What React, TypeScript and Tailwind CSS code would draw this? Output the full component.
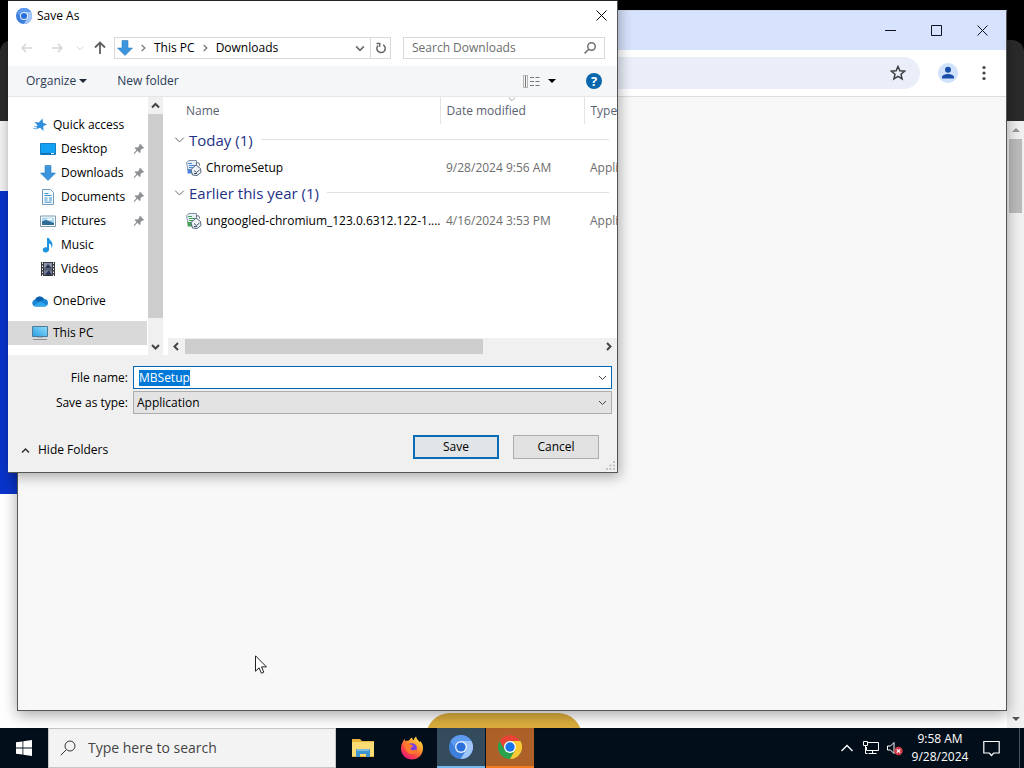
import { useEffect, useRef, type ReactNode } from 'react'

const segoe = "font-['Open_Sans','Noto_Sans',sans-serif]"

function Chevron({ dir, className }: { dir: 'up' | 'down' | 'left' | 'right'; className?: string }) {
  const paths = {
    up: 'M1 6.5 4.5 3 8 6.5',
    down: 'M1 3 4.5 6.5 8 3',
    left: 'M6 1 2.5 4.5 6 8',
    right: 'M3 1 6.5 4.5 3 8',
  }
  return (
    <svg viewBox="0 0 9 9" fill="none" stroke="currentColor" className={className} aria-hidden>
      <path d={paths[dir]} />
    </svg>
  )
}

function Caret({ className }: { className?: string }) {
  return (
    <svg viewBox="0 0 8 4" fill="currentColor" className={className} aria-hidden>
      <path d="M0 0h8L4 4z" />
    </svg>
  )
}

function ChromiumIcon({ className }: { className?: string }) {
  return (
    <svg viewBox="0 0 24 24" className={className} aria-hidden>
      <circle cx="12" cy="12" r="12" fill="#3f7fdc" />
      <path d="M12 6h10.4A12 12 0 0 1 11.6 24l5.6-9z" fill="#9fc5fb" />
      <path d="M1.6 6A12 12 0 0 1 22.4 6H12a6 6 0 0 0-5.4 3.4L5 11.5z" fill="#5e9bf0" />
      <circle cx="12" cy="12" r="6" fill="#e8f1fe" />
      <circle cx="12" cy="12" r="4.6" fill="#2a6fdb" />
    </svg>
  )
}

function ChromeIcon({ className }: { className?: string }) {
  return (
    <svg viewBox="0 0 24 24" className={className} aria-hidden>
      <circle cx="12" cy="12" r="12" fill="#2ba24c" />
      <path d="M12 6h10.4A12 12 0 0 1 12 24l5.2-9z" fill="#fcc934" />
      <path d="M1.6 6A12 12 0 0 1 22.4 6H12a6 6 0 0 0-5.2 9z" fill="#ea4335" />
      <circle cx="12" cy="12" r="6" fill="#fff" />
      <circle cx="12" cy="12" r="4.7" fill="#1a73e8" />
    </svg>
  )
}

function FirefoxIcon() {
  return (
    <svg viewBox="0 0 24 24" className="size-6" aria-hidden>
      <defs>
        <linearGradient id="fox" x1="0.9" y1="0" x2="0.2" y2="1">
          <stop offset="0" stopColor="#fff04a" />
          <stop offset="0.4" stopColor="#ff9a2b" />
          <stop offset="0.75" stopColor="#fb3b4b" />
          <stop offset="1" stopColor="#e31587" />
        </linearGradient>
      </defs>
      <path
        d="M3.2 5.2c.4-1 1-1.700 1.500-2.100 0 .9.300 1.600.900 2.200 1-.5 2.200-.8 3.400-.7C9.800 3 11 2 12.300 1.600c-.2 1.200.3 2 1.300 2.700.4-1.600 1.300-3 2.500-3.800.3 2.700 2.500 3.900 3.900 5.700.2-.4.100-1-.1-1.400 2.300 2 3.400 5 3.100 8.200C22.500 19 18 23.500 12 23.500S1 19 1 12.800c0-3 .8-5.800 2.200-7.600z"
        fill="url(#fox)"
      />
      <circle cx="12" cy="12.300" r="5" fill="#7a3fe0" />
      <path d="M4.500 8.500c2-1.500 4.500-1 6 .3 1.300 0 2.300.4 2.600 1.100-.5 1-2.200 1.200-2.900 2.500 1 2.500 4.500 2.600 6.500.4 0 3.700-2.700 5.600-5.500 5.300-3.600-.4-6-3.600-6.700-9.600z" fill="#ff7a2b" />
    </svg>
  )
}

function ExplorerIcon() {
  return (
    <svg viewBox="0 0 22 20" className="h-5 w-[22px]" aria-hidden>
      <path d="M0 1h8l2 2h12v16H0z" fill="#e9b43c" />
      <path d="M0 4h22v14H0z" fill="#fbdc74" />
      <path d="M4 12a1 1 0 0 1 1-1h12a1 1 0 0 1 1 1v7h-4v-3H8v3H4z" fill="#3f95cf" />
      <path d="M5 11h12v2H5z" fill="#7cbbe0" />
    </svg>
  )
}

function DownArrowIcon() {
  return (
    <svg viewBox="0 0 16 16" className="size-4" aria-hidden>
      <path d="M5 .5h6V8h4.500L8 15.500.5 8H5z" fill="#3b94dc" stroke="#2f7fc2" strokeWidth=".6" />
    </svg>
  )
}

function MagnifierIcon({ className }: { className?: string }) {
  return (
    <svg viewBox="0 0 16 16" fill="none" stroke="currentColor" className={className} aria-hidden>
      <circle cx="10" cy="6" r="5" />
      <path d="M6.300 9.700.8 15.200" />
    </svg>
  )
}

const icons: Record<string, ReactNode> = {
  star: (
    <svg viewBox="0 0 16 16" className="size-4" aria-hidden>
      <path d="M10.500 1.500 11 5.800l4 1.500-3.700 2 .2 4.700-3.400-3.200-4.600 1.700 2-4L2.500 5l4.300.5z" fill="#2f8fdc" />
      <path d="M1 11.500h4M2 9.500h3" stroke="#7dbcec" />
    </svg>
  ),
  desktop: (
    <svg viewBox="0 0 16 16" className="size-4" aria-hidden>
      <path d="M.5 2.500h15v11H.5z" fill="#12a0f4" stroke="#1680c4" />
      <path d="M1 12h14v1.500H1z" fill="#0d6db0" />
      <path d="M11 12.600h3" stroke="#fff" />
    </svg>
  ),
  downloads: <DownArrowIcon />,
  documents: (
    <svg viewBox="0 0 16 16" className="size-4" aria-hidden>
      <path d="M2.500.5h8l3 3v12h-11z" fill="#f4fafe" stroke="#6f9cbb" />
      <path d="M4.500 4.500h4M4.500 6.500h7M4.500 9h3M9 9h3M4.500 11h3M9 11h3M4.500 13.200h7" stroke="#3d8fc9" />
    </svg>
  ),
  pictures: (
    <svg viewBox="0 0 16 16" className="size-4" aria-hidden>
      <path d="M.5 3h15v10.500H.5z" fill="#fff" stroke="#7f99aa" />
      <path d="M2 4.500h12v7.500H2z" fill="#a8d7f3" />
      <path d="M2 8.500 6 7l8 3v2H2z" fill="#2f6c96" />
      <path d="M7 5.500h5v1.500H7z" fill="#fff" />
    </svg>
  ),
  music: (
    <svg viewBox="0 0 16 16" className="size-4" aria-hidden>
      <path d="M7 1h2c.3 2.500 3.800 3 3.500 7.500-.1 1.200-.6 2-1.200 2.500.4-2.600-.3-4-2.300-4.500v6c0 1.700-1.300 2.900-3.200 2.900S2.700 14.500 2.700 13c0-2 2-3.200 4.300-2.600z" fill="#1f93e0" />
    </svg>
  ),
  videos: (
    <svg viewBox="0 0 16 16" className="size-4" aria-hidden>
      <path d="M1 1h14v14H1z" fill="#37393d" />
      <path d="M4 2h8v5.500H4z" fill="#8795ad" />
      <path d="M4 8.500h8V14H4z" fill="#6d7a94" />
      <path d="m5 7 3-4 3.500 4zM5 14l4-5 2.500 5z" fill="#2a3350" />
      <path d="M2.500 1.500v14M13.500 1.500v14" stroke="#f2f2f2" strokeDasharray="1.500 1.500" />
    </svg>
  ),
  onedrive: (
    <svg viewBox="0 0 16 16" className="size-4" aria-hidden>
      <path d="M3.500 13.500A3.500 3.500 0 0 1 3 6.600 5 5 0 0 1 12 6a3.800 3.800 0 0 1 1 7.500z" fill="#1a83d2" />
      <path d="M3.200 6.500A5 5 0 0 1 12 6L7 9z" fill="#0c5fae" />
      <path d="m1.500 12.500 6.500-4 7 3.500a3 3 0 0 1-2 1.500H3.500z" fill="#2fa5ea" />
    </svg>
  ),
  pc: (
    <svg viewBox="0 0 16 16" className="size-4" aria-hidden>
      <defs>
        <linearGradient id="screen" x1="0" y1="1" x2="1" y2="0">
          <stop offset="0" stopColor="#2a9fe6" />
          <stop offset="1" stopColor="#8fdcf8" />
        </linearGradient>
      </defs>
      <path d="M.5 1.500h15v10H.5z" fill="url(#screen)" stroke="#4b7c9c" />
      <path d="M1 14.500h14" stroke="#8a8f94" />
      <path d="M5 12.500h6" stroke="#b5babf" />
    </svg>
  ),
}

function PinIcon() {
  return (
    <svg viewBox="0 0 12 12" className="ml-auto mr-0.5 size-3" fill="#8c9094" aria-hidden>
      <path d="m7 .8 4.200 4.200-1.200.5-.8-.1-1.700 1.800.1 2-1 .8L4.300 7.800 1.500 11l-.8-.3.200-.6 2.600-3.100L1.600 5l.9-.8 2.200.2 1.700-1.600-.1-1.200z" />
    </svg>
  )
}

function InstallerIcon({ accent }: { accent: string }) {
  return (
    <svg viewBox="0 0 16 16" className="size-4 shrink-0" aria-hidden>
      <path d="M.5 2.500 3 .5h7.500v10H2z" fill="#e6eef6" stroke="#8394a8" />
      <path d="M2 3.500h4M3 5.500h6M3 7.500h4" stroke={accent} />
      <path d="M1.500 9h6v4.500h-6z" fill={accent} />
      <path d="M5 9.500 10 5l4.500 3.500.5 4-4 3-4.500-.5z" fill="#eef3f8" stroke="#52637a" />
      <path d="M10 3.500c2-1.500 4-.5 3.500 2M8 10.500l2.500 2 3-2.500M8 13.500h3" fill="none" stroke="#40516b" />
    </svg>
  )
}

const tree = [
  { label: 'Quick access', icon: 'star' },
  { label: 'Desktop', icon: 'desktop', child: true, pinned: true },
  { label: 'Downloads', icon: 'downloads', child: true, pinned: true },
  { label: 'Documents', icon: 'documents', child: true, pinned: true },
  { label: 'Pictures', icon: 'pictures', child: true, pinned: true },
  { label: 'Music', icon: 'music', child: true },
  { label: 'Videos', icon: 'videos', child: true },
  { label: 'OneDrive', icon: 'onedrive', gap: true },
  { label: 'This PC', icon: 'pc', gap: true, selected: true },
]

const groups = [
  { title: 'Today (1)', file: 'ChromeSetup', date: '9/28/2024 9:56 AM', accent: '#4b86d8' },
  {
    title: 'Earlier this year (1)',
    file: 'ungoogled-chromium_123.0.6312.122-1....',
    date: '4/16/2024 3:53 PM',
    accent: '#46a35a',
  },
]

function NavBar() {
  return (
    <div className="flex h-9 items-center pr-3 pl-[11px]">
      <button aria-label="Back" className="flex w-[15px] justify-center text-[#d4d4d4]">
        <svg viewBox="0 0 12 12" fill="none" stroke="currentColor" strokeWidth="1.500" className="size-3" aria-hidden>
          <path d="M11 6H1.500M5 2 1.200 6 5 10" />
        </svg>
      </button>
      <button aria-label="Forward" className="ml-[15px] flex w-[15px] justify-center text-[#d4d4d4]">
        <svg viewBox="0 0 12 12" fill="none" stroke="currentColor" strokeWidth="1.500" className="size-3" aria-hidden>
          <path d="M1 6h9.500M7 2l3.800 4L7 10" />
        </svg>
      </button>
      <button aria-label="Recent locations" className="ml-2.5 flex w-3 justify-center text-[#cfcfcf]">
        <Chevron dir="down" className="size-2" />
      </button>
      <button aria-label="Up" className="ml-2 flex w-3 justify-center text-[#5f5f5f]">
        <svg viewBox="0 0 12 14" fill="none" stroke="currentColor" strokeWidth="1.800" className="h-3.5 w-3" aria-hidden>
          <path d="M6 13V2M1 6.500 6 1.500l5 5" />
        </svg>
      </button>
      <div className="ml-2 flex h-[22px] w-[277px] items-center border border-[#d9d9d9] pl-0.5">
        <DownArrowIcon />
        <Chevron dir="right" className="ml-1.5 size-2 stroke-[1.500] text-[#777]" />
        <button className="ml-[7px] text-left whitespace-nowrap">This PC</button>
        <Chevron dir="right" className="ml-1.5 size-2 stroke-[1.500] text-[#777]" />
        <button className="ml-[7px] text-left whitespace-nowrap">Downloads</button>
        <button aria-label="Previous locations" className="ml-auto flex w-5 justify-center text-[#6a6a6a]">
          <Chevron dir="down" className="size-2.5 stroke-[1.500]" />
        </button>
        <button aria-label="Refresh" className="flex h-5 w-5 items-center justify-center border-l border-[#d9d9d9] text-[#666]">
          <svg viewBox="0 0 12 12" fill="none" stroke="currentColor" strokeWidth="1.500" className="size-3" aria-hidden>
            <path d="M8.200 2.800A4.200 4.200 0 1 1 3 3.500M1.500 1.500h3.200v3.300" />
          </svg>
        </button>
      </div>
      <div className="ml-3 flex h-[22px] flex-1 items-center border border-[#d9d9d9] pr-2 pl-2">
        <input
          aria-label="Search Downloads"
          placeholder="Search Downloads"
          className="w-0 flex-1 outline-none placeholder:text-[#6d6d6d]"
        />
        <MagnifierIcon className="size-3 stroke-2 text-[#707070]" />
      </div>
    </div>
  )
}

function FolderTree() {
  return (
    <div className="flex">
      <ul className="w-[139px] pt-4">
        {tree.map((item) => (
          <li key={item.label} className={item.gap ? 'mt-2' : ''}>
            <button
              className={`flex h-6 w-full items-center gap-[5px] text-left whitespace-nowrap ${
                item.child ? 'pl-8' : 'pl-6'
              } ${item.selected ? 'bg-[#d9d9d9]' : ''}`}
            >
              {icons[item.icon]}
              {item.label}
              {item.pinned && <PinIcon />}
            </button>
          </li>
        ))}
      </ul>
      <div className="ml-px flex w-[15px] flex-col items-center bg-[#f0f0f0] text-[#444]">
        <Chevron dir="up" className="my-1 size-[9px] stroke-2" />
        <div className="w-full flex-1 bg-[#cdcdcd]" />
        <Chevron dir="down" className="mt-6 mb-1 size-[9px] stroke-2" />
      </div>
    </div>
  )
}

function FileList() {
  return (
    <div className="flex min-w-0 flex-1 flex-col pl-px">
      <div className="flex-1 overflow-hidden">
        <table className="w-[540px] table-fixed border-collapse text-left">
          <colgroup>
            <col className="w-[276px]" />
            <col className="w-36" />
            <col />
          </colgroup>
          <thead>
            <tr className="h-[27px] text-[#5a6270]">
              <th className="border-r border-[#e4e4e4] pl-[22px] font-normal">Name</th>
              <th className="relative border-r border-[#e4e4e4] pl-1.5 font-normal">
                Date modified
                <Chevron dir="down" className="absolute -top-0.5 left-[67px] size-2 text-[#9a9a9a]" />
              </th>
              <th className="pl-1.5 font-normal">Type</th>
            </tr>
          </thead>
          {groups.map((g) => (
            <tbody key={g.title}>
              <tr className="h-[27px]">
                <th colSpan={3} className="pl-2.5 font-normal">
                  <div className="flex w-[435px] items-center pt-1 text-[15px] leading-5 text-[#1e3287]">
                    <Chevron dir="down" className="size-[11px] stroke-[0.8] text-[#666]" />
                    <span className="ml-1 whitespace-nowrap">{g.title}</span>
                    <span className="ml-2 h-px flex-1 bg-[#e2e2e2]" />
                  </div>
                </th>
              </tr>
              <tr className="h-[26px]">
                <td className="pt-2 pl-[22px]">
                  <div className="flex items-center gap-1 whitespace-nowrap">
                    <InstallerIcon accent={g.accent} />
                    {g.file}
                  </div>
                </td>
                <td className="pt-2 pl-1.5 whitespace-nowrap text-[#6d6d6d]">{g.date}</td>
                <td className="pt-2 pl-1.5 text-[#6d6d6d]">Application</td>
              </tr>
            </tbody>
          ))}
        </table>
      </div>
      <div className="ml-1 flex h-[17px] items-center bg-[#f0f0f0] text-[#444]">
        <Chevron dir="left" className="mx-1 size-[9px] stroke-2" />
        <div className="h-[15px] w-[298px] bg-[#cdcdcd]" />
        <Chevron dir="right" className="mr-1 ml-auto size-[9px] stroke-2" />
      </div>
    </div>
  )
}

function SaveAsDialog() {
  const nameRef = useRef<HTMLInputElement>(null)

  useEffect(() => {
    nameRef.current?.focus()
    nameRef.current?.select()
  }, [])

  return (
    <section
      aria-label="Save As"
      className="absolute top-0 left-2 w-[610px] border-t border-r border-b border-[#555] border-t-[#222] bg-white text-xs text-black shadow-[2px_4px_12px_rgba(0,0,0,0.3)]"
    >
      <header className="flex h-[29px] items-center pr-2.5 pl-2">
        <ChromiumIcon className="size-4" />
        <h1 className="ml-[5px]">Save As</h1>
        <button aria-label="Close" className="ml-auto">
          <svg viewBox="0 0 11 11" fill="none" stroke="currentColor" className="size-[11px]" aria-hidden>
            <path d="m.5.5 10 10M10.500.5l-10 10" />
          </svg>
        </button>
      </header>
      <NavBar />
      <div className="flex h-[31px] items-center border-b border-[#e5e7e9] bg-[#f5f6f7] pr-[15px] pl-[18px] text-[#2b3a55]">
        <button className="flex items-center gap-[3px]">
          Organize <Caret className="h-1 w-2 text-[#1f2937]" />
        </button>
        <button className="ml-[30px]">New folder</button>
        <button aria-label="Change your view" className="ml-auto flex items-center gap-2">
          <svg viewBox="0 0 17 13" fill="none" stroke="#777" className="h-[13px] w-[17px]" aria-hidden>
            <path d="M.5.5h4v12h-4z" strokeDasharray="1 1" />
            <path d="M2.500 1v11M7 2.500h4M7 6.500h4M7 10.500h4M12.500 2.500h4M12.500 6.500h4M12.500 10.500h4" />
          </svg>
          <Caret className="h-1 w-2 text-black" />
        </button>
        <button
          aria-label="Help"
          className="ml-[30px] flex size-4 items-center justify-center rounded-full bg-[#0a66ad] text-[13px] leading-4 font-bold text-white"
        >
          ?
        </button>
      </div>
      <div className="flex h-[258px]">
        <FolderTree />
        <FileList />
      </div>

      <div className="bg-[#f0f0f0] pt-[11px] pb-[13px]">
        <div className="grid grid-cols-[120px_1fr] items-center gap-x-[5px] gap-y-0.5 pr-[5px]">
          <label htmlFor="file-name" className="text-right">
            File name:
          </label>
          <div className="flex h-[23px] items-center border border-[#0067b8] bg-white pr-1 pl-[5px]">
            <input
              id="file-name"
              ref={nameRef}
              defaultValue="MBSetup"
              className="h-4 w-0 flex-1 leading-4 outline-none selection:bg-[#0078d7] selection:text-white"
            />
            <Chevron dir="down" className="size-[9px] text-[#444]" />
          </div>
          <label htmlFor="save-type" className="text-right">
            Save as type:
          </label>
          <div className="grid h-[23px] items-center border border-[#adadad] bg-[#e3e3e3]">
            <select id="save-type" className="col-start-1 row-start-1 appearance-none pl-[3px] outline-none">
              <option>Application</option>
            </select>
            <Chevron
              dir="down"
              className="pointer-events-none col-start-1 row-start-1 mr-1 size-[9px] justify-self-end text-[#444]"
            />
          </div>
        </div>
        <div className="mt-[21px] flex h-6 items-center gap-[14px] pr-[18px] pl-[13px]">
          <button className="mr-auto flex items-center gap-2 pt-1.5">
            <Chevron dir="up" className="size-[9px] stroke-[1.500] text-[#333]" />
            Hide Folders
          </button>
          <button className="h-6 w-[86px] border-2 border-[#0a6cb5] bg-[#e1e5e8]">Save</button>
          <button className="h-6 w-[86px] border border-[#adadad] bg-[#e1e1e1]">Cancel</button>
        </div>
      </div>
      <svg viewBox="0 0 9 9" className="absolute right-0.5 bottom-0.5 size-[9px]" fill="#c4c4c4" aria-hidden>
        <path d="M7 0h2v2H7zM3.500 3.500h2v2h-2zM7 3.500h2v2H7zM0 7h2v2H0zM3.500 7h2v2h-2zM7 7h2v2H7z" />
      </svg>
    </section>
  )
}

/* Page in the browser that sits behind the popup */
function BackgroundPage() {
  return (
    <div className="flex flex-1 flex-col bg-black">
      <div className="h-10" />
      <div className="h-[81px] rounded-t-xl bg-[#2b2b2b]" />
      <div className="flex flex-1 bg-white">
        <div className="flex flex-1 flex-col">
          <div className="h-[70px] bg-[#f3f3f3]" />
          <div className="h-[303px] bg-[#0a35cc]" />
          <div className="mt-auto flex h-[15px] justify-center overflow-hidden">
            <div className="h-12 w-[156px] rounded-3xl bg-[#dcae3e]" />
          </div>
        </div>
        <div className="flex w-[17px] flex-col items-center bg-[#f1f1f1] text-[#555]">
          <Caret className="my-[7px] h-1 w-2 rotate-180 text-[#999]" />
          <div className="h-[74px] w-[13px] bg-[#bcbcbc]" />
          <Caret className="mt-auto mb-[7px] h-1 w-2" />
        </div>
      </div>
    </div>
  )
}

function PopupWindow() {
  return (
    <section
      aria-label="Browser"
      className="absolute inset-x-[17px] top-2.5 bottom-[57px] flex flex-col border border-[#555] border-t-[#cfd8ea] bg-[#f8f8f8] shadow-[0_4px_14px_rgba(0,0,0,0.35)]"
    >
      <header className="flex h-[39px] items-center justify-end gap-[35px] bg-[#d7e2fc] pr-[18px] text-[#10131f]">
        <button aria-label="Minimize">
          <svg viewBox="0 0 11 11" stroke="currentColor" className="size-[11px]" aria-hidden>
            <path d="M0 5.500h11" />
          </svg>
        </button>
        <button aria-label="Maximize">
          <svg viewBox="0 0 11 11" fill="none" stroke="currentColor" className="size-[11px]" aria-hidden>
            <path d="M.5.5h10v10H.5z" />
          </svg>
        </button>
        <button aria-label="Close">
          <svg viewBox="0 0 11 11" fill="none" stroke="currentColor" className="size-[11px]" aria-hidden>
            <path d="m.5.5 10 10M10.500.5l-10 10" />
          </svg>
        </button>
      </header>
      <div className="flex h-[47px] items-center border-b border-[#dcdde0] bg-white pr-3.5 pl-2">
        <div className="flex h-8 flex-1 items-center rounded-full bg-[#e9eef9] pr-3.5 pl-4">
          <input aria-label="Address" className="w-0 flex-1 outline-none" />
          <button aria-label="Bookmark this tab">
            <svg viewBox="0 0 16 16" fill="none" stroke="#3c4043" strokeWidth="1.500" className="size-4" aria-hidden>
              <path d="m8 1.500 1.900 4.300 4.700.4-3.600 3.100 1.100 4.600L8 11.400l-4.100 2.500L5 9.300 1.400 6.200l4.700-.4z" />
            </svg>
          </button>
        </div>
        <button aria-label="Profile" className="ml-[18px]">
          <svg viewBox="0 0 20 20" className="size-5" aria-hidden>
            <circle cx="10" cy="10" r="10" fill="#cfe1fb" />
            <circle cx="10" cy="6.700" r="3" fill="#1a4fa8" />
            <path d="M4 15.500v-1.400c0-2.100 3.600-3.200 6-3.200s6 1.100 6 3.200v1.400z" fill="#1a4fa8" />
          </svg>
        </button>
        <button aria-label="Menu" className="ml-[18px]">
          <svg viewBox="0 0 16 16" fill="#444" className="size-4" aria-hidden>
            <circle cx="8" cy="2.500" r="1.600" />
            <circle cx="8" cy="8" r="1.600" />
            <circle cx="8" cy="13.500" r="1.600" />
          </svg>
        </button>
      </div>
    </section>
  )
}

function Taskbar() {
  return (
    <footer className="flex h-10 items-stretch bg-[#020f1b] text-xs text-white">
      <button aria-label="Start" className="flex w-12 items-center justify-center">
        <svg viewBox="0 0 16 16" fill="#fff" className="size-4" aria-hidden>
          <path d="M0 2.300 6.500 1.400v6.200H0zM7.300 1.300 16 0v7.600H7.300zM0 8.400h6.500v6.200L0 13.700zM7.300 8.400H16V16l-8.700-1.200z" />
        </svg>
      </button>
      <div className="flex w-72 items-center border border-[#c4c8cb] bg-[#f3f3f3] pl-[11px] text-[#333]">
        <MagnifierIcon className="size-4" />
        <input
          aria-label="Type here to search"
          placeholder="Type here to search"
          className="ml-3 w-0 flex-1 text-sm outline-none placeholder:text-[#444]"
        />
      </div>
      <div className="ml-[3px] flex gap-px">
        <button aria-label="File Explorer" className="flex w-12 items-center justify-center">
          <ExplorerIcon />
        </button>
        <button aria-label="Firefox" className="flex w-12 items-center justify-center">
          <FirefoxIcon />
        </button>
        <button aria-label="Chromium" className="flex w-12 items-center justify-center border-b-2 border-[#76b9ed] bg-[#344b5c]">
          <ChromiumIcon className="size-6" />
        </button>
        <button aria-label="Google Chrome" className="flex w-12 items-center justify-center border-b-2 border-[#f47b20] bg-[#ad6028]">
          <ChromeIcon className="size-6" />
        </button>
      </div>
      <div className="ml-auto flex items-center">
        <button aria-label="Show hidden icons">
          <svg viewBox="0 0 12 8" fill="none" stroke="currentColor" strokeWidth="1.300" className="h-2 w-3" aria-hidden>
            <path d="m.5 7 5.500-5.500L11.500 7" />
          </svg>
        </button>
        <button aria-label="Network" className="ml-2.5">
          <svg viewBox="0 0 16 14" fill="none" stroke="currentColor" className="h-3.5 w-4" aria-hidden>
            <path d="M5 1.500h10.500v8H3.500V6M9.500 9.500v3M5.500 12.500h8M.5.500h4v4h-4zM2.500 4.500v8h2" />
          </svg>
        </button>
        <button aria-label="Volume muted" className="ml-2">
          <svg viewBox="0 0 16 15" className="h-[15px] w-4" aria-hidden>
            <path d="M.5 5h3L7 1.500v11L3.500 9h-3z" fill="none" stroke="#fff" />
            <circle cx="11.500" cy="10" r="4.200" fill="#d4394a" />
            <path d="m9.800 8.300 3.400 3.400M13.200 8.300l-3.400 3.400" stroke="#fff" strokeWidth="1.200" />
          </svg>
        </button>
        <button className="ml-1.5 w-[62px] text-center leading-[18px] whitespace-nowrap">
          9:58 AM
          <br />
          9/28/2024
        </button>
        <button aria-label="Notifications" className="ml-3">
          <svg viewBox="0 0 17 17" fill="none" stroke="currentColor" strokeWidth="1.200" className="size-[17px]" aria-hidden>
            <path d="M.8 1.500h15.400v11.500h-5.500L8.500 15.500 6.300 13H.8z" />
          </svg>
        </button>
        <button aria-label="Show desktop" className="ml-[19px] h-10 w-[5px] border-l border-[#4a545d]" />
      </div>
    </footer>
  )
}

export default function App() {
  return (
    <main className={`relative flex h-screen flex-col overflow-hidden ${segoe}`}>
      <BackgroundPage />
      <PopupWindow />
      <SaveAsDialog />
      <svg viewBox="0 0 12 19" className="absolute top-[655px] left-[255px] h-[19px] w-3" aria-hidden>
        <path d="M.5.8v15.400l3.600-3.400 2.300 5.400 2.400-1-2.300-5.300h5z" fill="#fff" stroke="#222" />
      </svg>
      <Taskbar />
    </main>
  )
}
